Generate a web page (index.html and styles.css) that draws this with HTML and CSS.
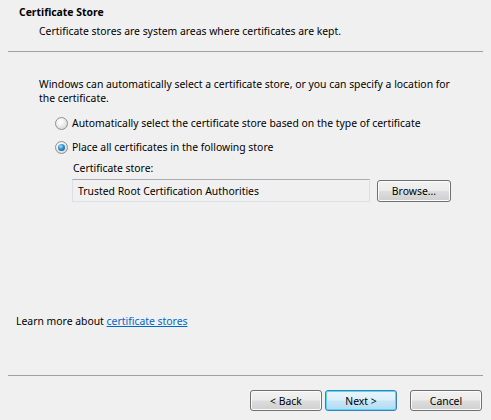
FILE: index.html
```html
<!DOCTYPE html>
<html>
<head>
<meta charset="utf-8">
<link rel="stylesheet" href="styles.css">
</head>
<body>
<div class="header">
  <div class="title">Certificate Store</div>
  <div class="subtitle">Certificate stores are system areas where certificates are kept.</div>
</div>
<div class="sep"></div>
<div class="content">
  <div class="options">
    <p class="intro">Windows can automatically select a certificate store, or you can specify a location for the certificate.</p>
    <label class="radio-row first"><span class="radio"></span><span>Automatically select the certificate store based on the type of certificate</span></label>
    <label class="radio-row"><span class="radio checked"></span><span>Place all certificates in the following store</span></label>
    <div class="store">
      <div class="store-label">Certificate store:</div>
      <div class="store-row">
        <div class="textbox">Trusted Root Certification Authorities</div>
        <div class="btn browse">Browse...</div>
      </div>
    </div>
  </div>
  <div class="learn">Learn more about <a class="link" href="#">certificate stores</a></div>
</div>
<div class="sep"></div>
<div class="footer">
  <div class="btn">&lt; Back</div>
  <div class="btn default">Next &gt;</div>
  <div class="btn cancel">Cancel</div>
</div>
</body>
</html>
```
FILE: styles.css
```css
html, body {
  margin: 0;
  padding: 0;
}
body {
  width: 491px;
  height: 420px;
  background: #f0f0f0;
  font-family: "Noto Sans", "Open Sans", sans-serif;
  font-size: 10.4px;
  line-height: 14px;
  color: #000;
  display: flex;
  flex-direction: column;
  overflow: hidden;
}
.header {
  height: 51px;
  box-sizing: border-box;
  padding: 5px 0 0 19px;
}
.title {
  font-weight: bold;
}
.subtitle {
  margin-top: 5px;
  padding-left: 20px;
}
.sep {
  height: 1px;
  margin: 0 8px;
  background: #a0a0a0;
  flex: none;
}
.content {
  flex: 1;
  display: flex;
  flex-direction: column;
}
.options {
  padding: 25px 0 0 39px;
}
.intro {
  margin: 0;
  width: 420px;
}
.radio-row {
  display: flex;
  align-items: center;
  margin-top: 10px;
  margin-left: 16px;
  height: 14px;
}
.radio-row.first {
  margin-top: 11px;
}
.radio {
  width: 11px;
  height: 11px;
  border: 1px solid #8e8f8f;
  border-radius: 50%;
  background: radial-gradient(circle at 40% 35%, #ffffff 0%, #f4f4f4 30%, #d7d7d7 80%, #cfcfcf 100%);
  margin-right: 4px;
  flex: none;
  position: relative;
}
.radio.checked::after {
  content: "";
  position: absolute;
  left: 2px;
  top: 2px;
  width: 7px;
  height: 7px;
  border-radius: 50%;
  background: radial-gradient(circle at 40% 35%, #a9e4ff 0%, #2a8fd1 45%, #0d4f88 100%);
}
.store {
  padding-left: 33px;
}
.store-label {
  margin-top: 7px;
  padding-left: 1px;
}
.store-row {
  display: flex;
  align-items: flex-start;
  margin-top: 4px;
}
.textbox {
  width: 298px;
  height: 23px;
  box-sizing: border-box;
  border: 1px solid #dbdfe6;
  border-top-color: #abadb3;
  background: #f0f0f0;
  padding: 4px 0 0 5px;
}
.btn {
  box-sizing: border-box;
  width: 72px;
  height: 21px;
  border: 1px solid #707070;
  border-radius: 3px;
  background: linear-gradient(#f2f2f2 0%, #ebebeb 48%, #dddddd 52%, #cfcfcf 100%);
  box-shadow: inset 0 0 0 1px #fbfbfb;
  display: flex;
  align-items: center;
  justify-content: center;
}
.browse {
  width: 74px;
  height: 22px;
  margin-left: 7px;
  margin-top: 1px;
}
.learn {
  margin-top: auto;
  margin-bottom: 47px;
  padding-left: 16px;
}
.link {
  color: #0066cc;
  text-decoration: underline;
}
.footer {
  display: flex;
  justify-content: flex-end;
  padding: 14px 9px 0 0;
  height: 30px;
  flex: none;
  gap: 3px;
}
.btn.default {
  border-color: #3c7fb1;
  background: linear-gradient(#e8f5fc 0%, #dbeffa 48%, #c6e6f7 52%, #b3dbf2 100%);
  box-shadow: inset 0 0 0 1px #5bd5f8;
}
.btn.cancel {
  margin-left: 10px;
}
```
